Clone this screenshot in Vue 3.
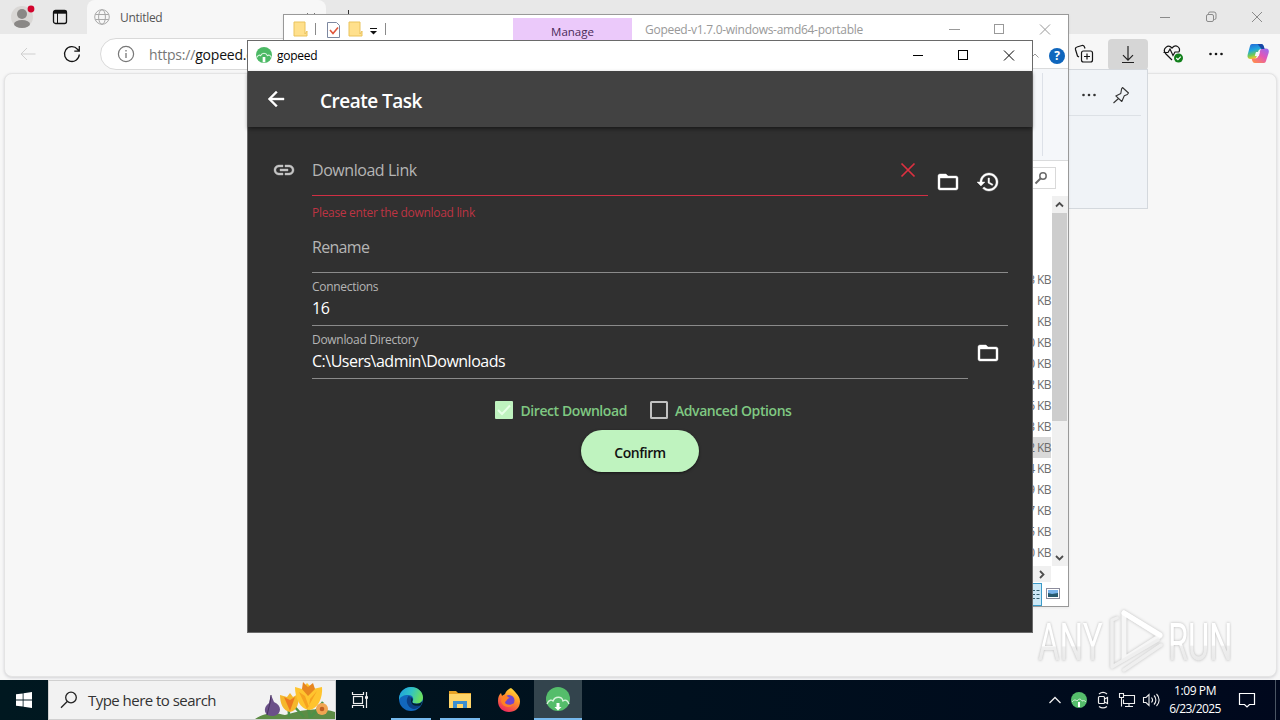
<script setup>
const sizes = ['3', '1', '1', '0', '0', '2', '6', '3', '2', '4', '9', '7', '5', '0']
const selectedRow = 8
const folderPath = 'M20 6h-8l-2-2H4c-1.1 0-1.99.9-1.99 2L2 18c0 1.1.9 2 2 2h16c1.1 0 2-.9 2-2V8c0-1.1-.9-2-2-2zm0 12H4V8h16v10z'
</script>

<template>
  <div class="desktop">
    <!-- Browser -->
    <section class="browser">
      <header class="tabstrip">
        <svg class="profile" width="28" height="28" viewBox="0 0 28 28">
          <circle cx="14" cy="14" r="11" fill="#d9d7d5" />
          <circle cx="14" cy="11" r="5" fill="#8a8886" />
          <ellipse cx="14" cy="21" rx="8" ry="4" fill="#8a8886" />
          <circle cx="23" cy="6" r="3.4" fill="#d2042d" />
        </svg>
        <svg class="panes" width="16" height="16" viewBox="0 0 16 16" fill="none" stroke="#111">
          <rect x="1.5" y="1.5" width="13" height="13" rx="2" stroke-width="1.3" />
          <path d="M1.5 3.2h13" stroke-width="3" />
          <path d="M5.5 4v10.500" />
        </svg>
        <div class="tab">
          <svg width="16" height="16" viewBox="0 0 16 16" fill="none" stroke="#a9a9a9">
            <circle cx="8" cy="8" r="7.300" />
            <ellipse cx="8" cy="8" rx="3.4" ry="7.300" />
            <path d="M1.300 5.500h13.400M1.300 10.500h13.400" />
          </svg>
          <span class="tab-name">Untitled</span>
          <svg class="tab-x" width="10" height="10" viewBox="0 0 10 10" stroke="#777"><path d="M1 1l8 8M9 1l-8 8" /></svg>
        </div>
        <svg class="newtab" width="12" height="12" viewBox="0 0 12 12" stroke="#333"><path d="M6.500 0v12M0 6.500h12" /></svg>
        <div class="caption">
          <svg width="46" height="34" viewBox="0 0 46 34" fill="none" stroke="#8a8a8a"><path d="M18 17.500h10" /></svg>
          <svg width="46" height="34" viewBox="0 0 46 34" fill="none" stroke="#8a8a8a">
            <rect x="18.500" y="14.500" width="7" height="7" rx="1.500" />
            <path d="M20.500 14v-.5a1.500 1.500 0 0 1 1.500-1.500h4a2 2 0 0 1 2 2v4a1.500 1.500 0 0 1-1.500 1.500H26" />
          </svg>
          <svg width="46" height="34" viewBox="0 0 46 34" fill="none" stroke="#8a8a8a"><path d="M18 12l10 10M28 12l-10 10" /></svg>
        </div>
      </header>
      <div class="toolbar">
        <svg class="nav-back" width="18" height="16" viewBox="0 0 18 16" fill="none" stroke="#cfcfcf"><path d="M16.500 8H2M8 2L2 8l6 6" /></svg>
        <svg class="reload" width="18" height="18" viewBox="0 0 18 18" fill="none" stroke="#151515" stroke-width="1.3">
          <path d="M16.300 9.500A7.400 7.400 0 1 1 14.500 4.200L16.200 6M16.300 1v5.200h-5" />
        </svg>
        <div class="address">
          <svg width="18" height="18" viewBox="0 0 18 18" fill="none" stroke="#777">
            <circle cx="9" cy="9" r="7.600" stroke-width="1.200" /><path d="M9 8v5M9 5v1.500" stroke-width="1.300" />
          </svg>
          <span class="url"><i>https://</i>gopeed.com</span>
        </div>
        <div class="tools">
          <svg class="collections" width="44" height="32" viewBox="0 0 44 32" fill="none" stroke="#151515" stroke-width="1.200">
            <rect x="18.500" y="12" width="11" height="11" rx="2" fill="#f7f7f7" />
            <path d="M24 14.500v6M21 17.500h6M16 18l-1.500-1-2-6.500a2 2 0 0 1 1.500-2.500l5-1.500a2 2 0 0 1 2.500 1.500l.5 1.500" />
          </svg>
          <div class="dl">
            <svg width="40" height="30" viewBox="0 0 40 30" fill="none" stroke="#222" stroke-width="1.200"><path d="M20 7v14M15 16.200l5 5 5-5M14 23.500h12" /></svg>
          </div>
          <svg class="health" width="24" height="22" viewBox="0 0 24 22" fill="none" stroke="#151515" stroke-width="1.200">
            <path d="M10 17L3.500 10.500C0 6 6 .5 10 5c4-4.500 9-.5 7 4M1.500 9.500H6l2-3.500 3 6.500 2-3.500h4" />
            <circle cx="16.500" cy="15" r="4.500" fill="#12801c" stroke="none" />
            <path d="M14.300 15l1.600 1.600 2.900-3" stroke="#fff" />
          </svg>
          <svg class="more" width="16" height="4" viewBox="0 0 16 4" fill="#151515"><circle cx="2.500" cy="2" r="1.300" /><circle cx="8" cy="2" r="1.300" /><circle cx="13.500" cy="2" r="1.300" /></svg>
          <svg class="copilot" width="22" height="21" viewBox="0 0 22 21">
            <defs>
              <linearGradient id="cpA" x1="0" y1="0" x2="0.300" y2="1"><stop offset="0" stop-color="#2463d6" /><stop offset=".45" stop-color="#20a6df" /><stop offset=".75" stop-color="#6ecb59" /><stop offset="1" stop-color="#ffca28" /></linearGradient>
              <linearGradient id="cpB" x1="1" y1="0" x2="0.200" y2="1"><stop offset="0" stop-color="#8e6ff7" /><stop offset=".5" stop-color="#e257b7" /><stop offset="1" stop-color="#ff8a50" /></linearGradient>
            </defs>
            <path d="M5 1h9c2 0 2.500 1.500 3 3l.5 2h-3c-2 0-3 1-3.500 3l-1.500 5c-.5 1.500-1.500 2-3 2H3.500C1 16 0 14 .7 11.500L3 3c.3-1.200 1-2 2-2z" fill="url(#cpA)" />
            <path d="M17 20H8c-2 0-2.500-1.500-3-3l-.3-1.500H8c2 0 3-1 3.500-3L13 8c.5-2 1.500-2.500 3-2.500h3c2.500 0 3.300 2 2.600 4.500L19 18c-.3 1.200-1 2-2 2z" fill="url(#cpB)" />
            <path d="M9 9h4l-1.200 4H7.800z" fill="#f7f7f7" />
            <path d="M10.500 1H14c2 0 2.500 1.500 3 3l.5 2h-3z" fill="#1846a5" />
          </svg>
        </div>
      </div>
      <div class="page"></div>
      <aside class="flyout">
        <div class="flyout-head">
          <svg width="16" height="4" viewBox="0 0 16 4" fill="#333"><circle cx="2.500" cy="2" r="1.300" /><circle cx="8" cy="2" r="1.300" /><circle cx="13.500" cy="2" r="1.300" /></svg>
          <svg width="18" height="18" viewBox="0 0 18 18" fill="none" stroke="#333" stroke-width="1.100" stroke-linejoin="round"><path d="M10.500 1.500l6 5.500-1.200 1.500-3 1.200-2.500 5.800-6-5.600 5-2.500 .8-4.500zM6.500 12.500L1.500 17" /></svg>
        </div>
      </aside>
    </section>

    <!-- File explorer -->
    <section class="explorer">
      <header class="ex-title">
        <svg class="ex-quick" width="110" height="25" viewBox="0 0 110 25" fill="none">
          <path d="M10 7h11v12l2-3v5H10z" fill="#ffe08c" stroke="#eac35c" />
          <path d="M31.500 8v12M101.500 8v12" stroke="#8a8a8a" />
          <path d="M43.500 7.500h9l3 3v12h-12z" stroke="#7d88a0" fill="#fff" /><path d="M46 15l3 3.500 5-6" stroke="#e0563b" stroke-width="1.600" />
          <path d="M65 7h11v12l2-3v5H65z" fill="#ffe08c" stroke="#eac35c" />
          <path d="M86 13.500h7" stroke="#111" /><path d="M86 16h7l-3.500 3.500z" fill="#111" />
        </svg>
        <div class="manage">Manage</div>
        <span class="ex-name">Gopeed-v1.7.0-windows-amd64-portable</span>
        <svg class="ex-caption" width="138" height="28" viewBox="0 0 138 28" fill="none" stroke="#999"><path d="M19 14.500h11M110 9.500l10 10M120 9.500l-10 10" /><rect x="64.500" y="9.500" width="9" height="9" /></svg>
      </header>
      <div class="ex-tabs">
        <svg width="8" height="5" viewBox="0 0 8 5" fill="none" stroke="#999"><path d="M.5 4.500l3.500-3.500 3.500 3.500" /></svg>
        <span class="help">?</span>
      </div>
      <div class="ribbon"><span></span></div>
      <div class="search-row">
        <div class="ex-search"><svg width="14" height="14" viewBox="0 0 14 14" fill="none" stroke="#6b6b6b" stroke-width="1.500"><circle cx="9" cy="5" r="3.200" /><path d="M6.500 7.500L1.500 12.500" stroke-width="2" /></svg></div>
      </div>
      <div class="files">
        <div class="rows">
          <div v-for="(n, i) in sizes" :key="i" class="file" :class="{ sel: i === selectedRow }">{{ n }} KB</div>
        </div>
        <div class="vbar">
          <svg width="15" height="17" viewBox="0 0 15 17" fill="none" stroke="#4d4d4d" stroke-width="1.800"><path d="M4 10.500l3.500-3.500 3.500 3.500" /></svg>
          <div class="thumb"></div>
          <svg class="down" width="15" height="17" viewBox="0 0 15 17" fill="none" stroke="#4d4d4d" stroke-width="1.800"><path d="M4 7l3.500 3.500L11 7" /></svg>
        </div>
      </div>
      <div class="hbar"><svg width="17" height="16" viewBox="0 0 17 16" fill="none" stroke="#4d4d4d" stroke-width="1.800"><path d="M6 5l3.500 3.500L6 12" /></svg></div>
      <div class="ex-status">
        <div class="details"><svg width="8" height="11" viewBox="0 0 8 11" stroke="#35606f"><path d="M0 1.500h3M4.500 1.500h3M0 5.500h3M4.500 5.500h3M0 9.500h3M4.500 9.500h3" /></svg></div>
        <svg class="thumbs" width="14" height="11" viewBox="0 0 14 11"><rect x=".5" y=".5" width="13" height="10" fill="#fff" stroke="#8c8c9c" /><path d="M2 2h10v7H2z" fill="#78b2ea" /><path d="M2 5l4 1 6-1v4H2z" fill="#28596f" /></svg>
      </div>
    </section>

    <!-- Watermark -->
    <svg class="mark" width="230" height="76" viewBox="0 0 230 76">
      <defs>
        <linearGradient id="wm" x1="0" y1="0" x2="0" y2="1"><stop offset=".55" stop-color="#fff" /><stop offset=".57" stop-color="#efefef" /><stop offset="1" stop-color="#e4e4e4" /></linearGradient>
      </defs>
      <text class="mark-text" transform="translate(8 56) scale(.65 1)" fill="url(#wm)">ANY</text>
      <text class="mark-text" transform="translate(138 56) scale(.64 1)" fill="url(#wm)">RUN</text>
      <g class="mark-shape" fill="none" stroke-width="5" stroke-linejoin="round" stroke-linecap="round">
        <path d="M94 9v46l36-23z" stroke="#f6f6f6" />
        <path d="M94 9l36 22" stroke="#fff" />
        <path d="M87 14l-5 2v47l46-27M94 66l37-25" stroke="#efefef" stroke-width="3.500" />
      </g>
    </svg>

    <!-- Gopeed -->
    <section class="gopeed">
      <header class="gp-title">
        <svg class="gp-logo" width="16" height="16" viewBox="0 0 24 24"><circle cx="12" cy="12" r="12" fill="#4cb965" /><path d="M1 16c2-5 5-4 6-3 2-5 8-5 10 0 3-2 5 0 6 3" fill="none" stroke="#e2f6e6" stroke-width="1.600" /><path d="M10 15h4v8h-4z" fill="#fff" /></svg>
        <span>gopeed</span>
        <svg class="gp-caption" width="138" height="30" viewBox="0 0 138 30" fill="none" stroke="#000" stroke-width="1"><path d="M19 14.500h10M110 9.500l10 10M120 9.500l-10 10" /><rect x="64.500" y="9.500" width="9" height="9" /></svg>
      </header>
      <div class="appbar">
        <svg width="24" height="24" viewBox="0 0 24 24" fill="#fff"><path d="M20 11H7.830l5.590-5.590L12 4l-8 8 8 8 1.410-1.410L7.830 13H20v-2z" stroke="#fff" stroke-width=".4" /></svg>
        <h1>Create Task</h1>
      </div>
      <div class="form">
        <div class="row">
          <svg class="link" width="24" height="24" viewBox="0 0 24 24" fill="#c4c4c4" stroke="#c4c4c4" stroke-width=".4"><path d="M3.900 12c0-1.710 1.390-3.100 3.100-3.100h4V7H7c-2.760 0-5 2.240-5 5s2.240 5 5 5h4v-1.900H7c-1.710 0-3.100-1.390-3.100-3.100zM8 13h8v-2H8v2zm9-6h-4v1.900h4c1.710 0 3.100 1.390 3.100 3.100s-1.390 3.100-3.100 3.100h-4V17h4c2.760 0 5-2.240 5-5s-2.240-5-5-5z" /></svg>
          <div class="field error">
            <span class="hint link-hint">Download Link</span>
            <svg width="16" height="16" viewBox="0 0 16 16" fill="none" stroke="#dc3040" stroke-width="1.700"><path d="M1.500 1.500l13 13M14.500 1.500l-13 13" /></svg>
          </div>
          <div class="action"><svg width="24" height="24" viewBox="0 0 24 24" fill="#fff" stroke="#fff" stroke-width=".4"><path :d="folderPath" /></svg></div>
          <div class="action"><svg width="24" height="24" viewBox="0 0 24 24" fill="#fff" stroke="#fff" stroke-width=".4"><path d="M13 3c-4.970 0-9 4.030-9 9H1l3.890 3.890.07.14L9 12H6c0-3.870 3.130-7 7-7s7 3.130 7 7-3.130 7-7 7c-1.930 0-3.680-.79-4.940-2.060l-1.420 1.420C8.270 19.990 10.510 21 13 21c4.970 0 9-4.030 9-9s-4.030-9-9-9zm-1 5v5l4.280 2.540.72-1.210-3.500-2.080V8H12z" /></svg></div>
        </div>
        <p class="message">Please enter the download link</p>
        <div class="row"><div class="field"><span class="hint rename">Rename</span></div></div>
        <div class="row"><div class="field filled"><label class="l-conn">Connections</label><span class="value">16</span></div></div>
        <div class="row">
          <div class="field filled"><label class="l-dir">Download Directory</label><span class="value v-dir">C:\Users\admin\Downloads</span></div>
          <div class="action"><svg width="24" height="24" viewBox="0 0 24 24" fill="#fff" stroke="#fff" stroke-width=".4"><path :d="folderPath" /></svg></div>
        </div>
        <div class="checks">
          <svg width="18" height="18" viewBox="0 0 18 18"><rect width="18" height="18" rx="1" fill="#bff3bf" /><path d="M3 9l4 4 8-8.500" fill="none" stroke="#e6ffe6" stroke-width="2" /></svg>
          <span class="c-direct">Direct Download</span>
          <svg width="18" height="18" viewBox="0 0 18 18"><rect x="1" y="1" width="16" height="16" rx=".5" fill="none" stroke="#c1c1c1" stroke-width="2" /></svg>
          <span class="c-adv">Advanced Options</span>
        </div>
        <button class="confirm">Confirm</button>
      </div>
    </section>

    <!-- Taskbar -->
    <footer class="taskbar">
      <div class="cell start"><svg width="16" height="16" viewBox="0 0 16 16" fill="#fff"><path d="M0 2.300l6.700-.9v6.100H0zM7.500 1.300L16 0v7.500H7.500zM0 8.400h6.700v6.200L0 13.700zM7.500 8.400H16V16l-8.500-1.200z" /></svg></div>
      <div class="searchbox">
        <svg width="18" height="18" viewBox="0 0 18 18" fill="none" stroke="#222" stroke-width="1.300"><circle cx="11" cy="6.500" r="5.300" /><path d="M7.200 10.500L1 16.800" /></svg>
        <span>Type here to search</span>
        <svg class="flowers" width="80" height="38" viewBox="0 0 80 38">
          <path d="M0 38C12 30 22 32 30 34c18-6 36-8 50-3v7z" fill="#5d8c45" />
          <path d="M16 14l3 7c8 3 8 12 0 14-10 1-12-8-5-13z" fill="#6b5089" /><path d="M16 14l-1 8-3 12" stroke="#48325f" fill="none" />
          <path d="M34 36c0-8-1-10 0-14M55 37c-2-12-4-18-2-23M49 36L37 23M56 36l12-15" stroke="#4d9147" stroke-width="2.500" fill="none" />
          <path d="M25 14l7 2 3-4 3 4 5-3c2 8-1 17-8 18-7-1-10-9-10-17z" fill="#f5b72c" /><path d="M29 16l6 14 5-14-5 3z" fill="#ed7920" />
          <path d="M40 6l7 2 5-6 6 6 9-2c1 11-4 22-13 23-9-1-14-12-14-23z" fill="#ffc42e" /><path d="M47 8l6 7 7-7-2-6-5 4-5-5z" fill="#e78620" /><path d="M44 11l8 17 10-18-7 8-1 8-4-11z" fill="#f6a21f" />
          <circle cx="67" cy="28" r="6" fill="#f1a552" /><circle cx="67" cy="28" r="2.300" fill="#bf5d22" />
        </svg>
      </div>
      <div class="cell task"><svg width="18" height="18" viewBox="0 0 18 18" fill="none" stroke="#eee" stroke-width="1.200"><rect x="2.500" y="5.500" width="9" height="7" /><path d="M1.500 1v2.500h11V1M1.500 17v-2.500h11V17M15.500 1v16" /><path d="M14 6.500h3" stroke-width="2.500" /></svg></div>
      <div class="cell app edge"><svg width="24" height="24" viewBox="0 0 24 24">
        <defs><linearGradient id="eg" x1="0" y1="0" x2="1" y2=".3"><stop offset="0" stop-color="#1c9be0" /><stop offset=".55" stop-color="#31c3c4" /><stop offset="1" stop-color="#69df62" /></linearGradient></defs>
        <circle cx="12" cy="12" r="12" fill="#1267bd" />
        <path d="M0 11C1 4 6 0 12 0c7 0 12 5 12 10.500 0 4-3 6-6.500 6-3 0-4.500-1-4-2 1.500-2 1-6.500-4-6.500C4 8 1 10 0 13z" fill="url(#eg)" />
        <path d="M9.500 9C6 13 8 20 14 22c4 0 7-2 8-4.500-5 2.500-11 0-10-3.500 1-2 0-5-2.500-5z" fill="#0c3f85" />
        <path d="M12.500 10c1.500 1.500 1.500 3 .8 4.500-.5 1.200 1 2.200 4.200 2.200 3 0 5-1 6-3l-1.500 4.500c-4 1.500-10 .5-10-4z" fill="#03202d" />
      </svg></div>
      <div class="cell app"><svg width="22" height="20" viewBox="0 0 22 20"><path d="M0 2h7l2 2h13v14H0z" fill="#e8a325" /><path d="M0 5h22v14H0z" fill="#ffd569" /><path d="M4 19v-7h14v7h-4v-4H8v4z" fill="#3c8fd0" /></svg></div>
      <div class="cell"><svg width="24" height="24" viewBox="0 0 24 24">
        <defs><linearGradient id="fx" x1=".8" y1="0" x2=".3" y2="1"><stop offset="0" stop-color="#ffe43c" /><stop offset=".45" stop-color="#ff9228" /><stop offset="1" stop-color="#ed2560" /></linearGradient></defs>
        <path d="M14 0c3 2 3.500 3.500 5 5 2.500 2.500 4 5 4 8.500C23 20 18 24 12 24S1 20 1 13c0-4 1-6 3-8l1 3 3-2c1-3 3-5 6-6z" fill="url(#fx)" /><circle cx="12" cy="12.500" r="5.500" fill="#7045ce" /><path d="M5 8c4-2 5 1 8 2-3 0-3 3-5 4 0 3 6 4 9 1-2 6-12 5-13-2z" fill="#ff8025" />
      </svg></div>
      <div class="cell app active"><svg width="24" height="24" viewBox="0 0 24 24"><circle cx="12" cy="12" r="12" fill="#55bd6b" /><path d="M1 17c2-5 5-4 6-3 2-5 9-5 10 0 3-2 5 0 6 3" fill="none" stroke="#d8f3dc" stroke-width="1.300" /><path d="M10.500 16h3v4h2l-3.500 3.500L8.500 20h2z" fill="#fff" /></svg></div>
      <div class="tray">
        <svg width="24" height="24" viewBox="0 0 24 24" fill="none" stroke="#eee" stroke-width="1.300"><path d="M6.500 15l5.500-5.500 5.500 5.500" /></svg>
        <svg width="24" height="24" viewBox="0 0 24 24"><circle cx="12" cy="12" r="8" fill="#55bd6b" /><path d="M5 14c2-3 4-2 5-1 2-3 4-2 5 0 2-1 3 0 4 1" fill="none" stroke="#d8f3dc" /><path d="M11 14h2v5h-2z" fill="#fff" /></svg>
        <svg width="24" height="24" viewBox="0 0 24 24" fill="none" stroke="#eee" stroke-width="1.200"><rect x="7.500" y="8.500" width="6" height="7" rx="1" /><path d="M13.500 11l3-1.500v6l-3-1.500M8 6c2.500-2 5.500-2 8 0M8 18.500c2.500 1.800 5.500 1.800 8 0" /></svg>
        <svg width="24" height="24" viewBox="0 0 24 24" fill="none" stroke="#eee" stroke-width="1.100"><path d="M9 7.500h10.500v8H8.500v-4M4.500 5.500h4v4h-4zM6.500 9.500v9M10 18.500h8M14 15.500v3" /></svg>
        <svg width="24" height="24" viewBox="0 0 24 24" fill="none" stroke="#eee" stroke-width="1.100"><path d="M4.500 9.500h2.500l3-3v11l-3-3H4.500zM12.500 9.500c1.300 1.500 1.300 3.500 0 5M15 7.500c2.500 2.500 2.500 6.500 0 9M17.500 6c3.500 3.500 3.500 8.500 0 12" /></svg>
      </div>
      <div class="clock"><span class="time">1:09 PM</span><span class="date">6/23/2025</span></div>
      <svg class="notice" width="18" height="18" viewBox="0 0 18 18" fill="none" stroke="#fff" stroke-width="1.200"><path d="M1.500 2.500h15v11h-5L9 16l-2.500-2.500h-5z" /></svg>
      <div class="peek"></div>
    </footer>
  </div>
</template>

<style>
body { margin: 0; overflow: hidden; }
</style>

<style scoped>
* { box-sizing: border-box; }
svg { display: block; flex: none; }
.desktop { position: relative; width: 1280px; height: 720px; overflow: hidden; font-family: "Open Sans", "Noto Sans", sans-serif; font-size: 12px; white-space: nowrap; }

.browser { position: absolute; inset: 0 0 40px; background: #f7f7f7; }
.tabstrip { display: flex; height: 34px; background: #e8e8e8; }
.profile { margin: 3px 0 0 8px; }
.panes { margin: 9px 0 0 16px; }
.tab { display: flex; align-items: center; width: 239px; height: 34px; margin-left: 19px; padding-left: 7px; background: #f7f7f7; border-radius: 8px 8px 0 0; }
.tab-name { margin-left: 10px; color: #555; letter-spacing: -.3px; }
.tab-x { margin: -1px 10px 0 auto; }
.newtab { margin: 10px 0 0 16px; }
.caption { display: flex; margin-left: auto; }
.toolbar { display: flex; height: 39px; padding-top: 4px; }
.nav-back { margin: 8px 0 0 19px; }
.reload { margin: 7px 0 0 26px; }
.address { display: flex; align-items: center; width: 860px; height: 32px; margin-left: 19px; padding-left: 16px; background: #fff; border: 1px solid #d9d9d9; border-radius: 16px; }
.url { margin-left: 14px; color: #111; font-size: 14px; letter-spacing: -.2px; }
.url i { color: #777; font-style: normal; }
.tools { display: flex; margin-left: auto; }
.collections { margin: 1px 1px 0 -1px; }
.dl { width: 40px; height: 31px; margin-top: 1px; background: #d6d6d6; border-radius: 4px; }
.health { margin: 5px 1px 0 14px; }
.more { margin: 14px 0 0 21px; }
.copilot { margin: 5px 11px 0 23px; }
.page { width: 1273px; height: 604px; margin-left: 4px; background: #f7f7f7; border: 1px solid #e4e4e4; border-radius: 8px; box-shadow: 0 1px 3px #d2d2d6; }
.flyout { position: absolute; left: 900px; top: 69px; width: 248px; height: 140px; background: #f0f3f7; border: 1px solid #d4d8dd; }
.flyout-head { display: flex; justify-content: flex-end; align-items: center; gap: 15px; height: 46px; margin-right: 6px; padding: 5px 11px 0 0; border-bottom: 1px solid #dde1e6; }

.explorer { position: absolute; left: 283px; top: 14px; width: 786px; height: 593px; background: #fff; border: 1px solid #999; display: flex; flex-direction: column; box-shadow: 0 1px 3px #0001; }
.ex-title { display: flex; height: 30px; }
.manage { width: 119px; height: 27px; margin: 3px 0 0 119px; background: #ebc9fa; color: #4a2a58; text-align: center; line-height: 28px; font-size: 11.500px; letter-spacing: 0; }
.ex-name { margin-left: 13px; line-height: 29px; color: #999; letter-spacing: -.28px; }
.ex-caption { margin-left: auto; }
.ex-tabs { display: flex; justify-content: flex-end; align-items: center; gap: 10px; height: 23px; padding: 0 3px 2px 0; }
.help { width: 16px; height: 16px; border-radius: 50%; background: #0f66bd; color: #fff; font-weight: 700; line-height: 16px; text-align: center; }
.ribbon { display: flex; justify-content: flex-end; height: 93px; background: #f5f7fa; border: solid #dadbdc; border-width: 1px 0; }
.ribbon span { width: 26px; margin: 4px 0; border-left: 1px solid #dde1e8; }
.search-row { display: flex; justify-content: flex-end; height: 35px; padding: 6px 12px 0 0; }
.ex-search { display: flex; align-items: center; justify-content: flex-end; width: 200px; height: 22px; border: 1px solid #d9d9d9; padding-right: 7px; }
.files { display: flex; height: 370px; }
.rows { flex: 1; padding-top: 73px; }
.file { height: 21px; line-height: 21px; margin-right: 1px; color: #6d6d6d; text-align: right; letter-spacing: -.5px; word-spacing: -.4px; }
.sel { background: #d9d9d9; }
.vbar { display: flex; flex-direction: column; width: 16px; background: #f0f0f0; }
.thumb { width: 15px; height: 208px; background: #cdcdcd; }
.down { margin-top: auto; }
.hbar { display: flex; justify-content: flex-end; width: 767px; height: 16px; background: #f0f0f0; }
.ex-status { display: flex; justify-content: flex-end; height: 24px; padding-right: 8px; }
.details { display: flex; align-items: center; justify-content: flex-end; width: 22px; height: 23px; margin-top: 1px; padding-right: 1px; background: #cce8f6; border: 1px solid #3a9bc9; }
.thumbs { margin: 6px 0 0 4px; }

.mark { position: absolute; left: 1030px; top: 604px; }
.mark-text { font: 400 51px Roboto, sans-serif; filter: drop-shadow(0 0 1.500px #b8b8b8); }
.mark-shape { filter: drop-shadow(0 0 1.500px #bdbdbd); }

.gopeed { position: absolute; left: 247px; top: 40px; width: 786px; height: 593px; border: 1px solid #6a6a6a; background: #303030; color: #fff; }
.gp-title { display: flex; height: 30px; background: #fff; color: #000; line-height: 30px; letter-spacing: -.25px; }
.gp-logo { margin: 6px 5px 0 8px; }
.gp-caption { margin-left: auto; }
.appbar { position: relative; display: flex; align-items: center; height: 56px; padding-left: 16px; background: #424242; box-shadow: 0 2px 4px #0007; }
.appbar svg { margin-top: 0; }
h1 { margin: 4px 0 0 32px; font-size: 19px; font-weight: 600; line-height: 28px; letter-spacing: -.5px; }
.form { display: flex; flex-direction: column; padding: 16px 24px 0 64px; }
.row { display: flex; height: 53px; }
.link { margin: 15px 16px 0 -40px; }
.field { display: flex; flex: 1; justify-content: space-between; align-items: center; border-bottom: 1px solid #8a8a8a; }
.field.error { border-bottom-color: #d02f44; }
.error svg { margin: 1px 12px 0 0; }
.hint { padding-top: 1px; color: #b5b5b5; font-size: 16px; letter-spacing: -.45px; }
.rename { letter-spacing: -.7px; }
.filled { flex-direction: column; align-items: flex-start; justify-content: flex-start; }
label { height: 18px; margin-top: 5px; color: #b5b5b5; line-height: 18px; letter-spacing: -.3px; }
.value { line-height: 25px; font-size: 16px; letter-spacing: -.5px; }
.action { display: flex; align-items: center; justify-content: center; width: 40px; padding-top: 24px; height: 54px; }
.row:nth-child(5) .action { padding-top: 0; }
.message { height: 24px; margin: 0; color: #bd3443; line-height: 34px; letter-spacing: -.31px; }
.checks { display: flex; align-items: center; align-self: center; height: 40px; margin: 11px 0 0 -33px; font-size: 14px; font-weight: 600; color: #7fc882; letter-spacing: -.42px; }
.checks span { margin: 1px 23px 0 7px; }
.checks .c-adv { margin-right: 0; }
.confirm { align-self: center; width: 118px; height: 42px; margin-left: -40px; padding: 2px 0 0; border: 0; border-radius: 21px; background: #bff3bf; color: #111; font: 600 14px "Open Sans", sans-serif; letter-spacing: -.45px; box-shadow: 0 1px 3px #0008; }

.taskbar { position: absolute; left: 0; top: 680px; width: 1280px; height: 40px; display: flex; background: linear-gradient(90deg, #001820, #000c1d 80%, #00081d); }
.cell { display: flex; align-items: center; justify-content: center; width: 48px; height: 40px; }
.cell.app { width: 40px; margin: 0 5px 0 4px; border-bottom: 2px solid #76b9ed; }
.cell.edge { margin-left: 7px; }
.cell.active { width: 48px; margin-left: 1px; background: #33444d; }
.searchbox { display: flex; align-items: center; width: 288px; background: #f2f2f2; border: 1px solid #d0d0d0; padding-left: 11px; color: #333; font-size: 15px; letter-spacing: -.53px; }
.searchbox span { margin-left: 10px; }
.flowers { margin-left: auto; }
.tray { display: flex; align-items: center; margin-left: auto; }
.clock { display: flex; flex-direction: column; align-items: center; width: 64px; color: #fff; line-height: 18px; padding-top: 2px; letter-spacing: -.4px; }
.date { letter-spacing: -.6px; }
.notice { margin: 11px 19px 0 11px; }
.peek { width: 5px; border-left: 1px solid #4a5563; }
</style>
